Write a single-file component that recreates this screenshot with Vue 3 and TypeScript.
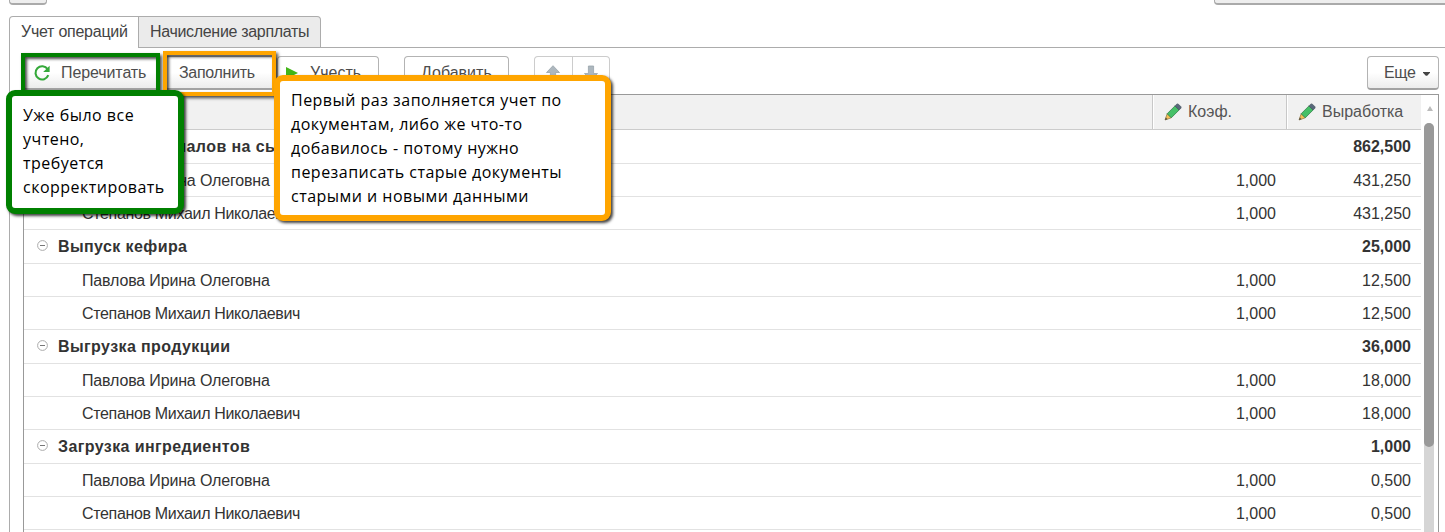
<script setup lang="ts">
interface Row {
  name: string
  coef?: string
  output: string
  group?: boolean
  long?: boolean
}

const rows: Row[] = [
  { name: 'Выдача материалов на сырье', output: '862,500', group: true },
  { name: 'Павлова Ирина Олеговна', coef: '1,000', output: '431,250' },
  { name: 'Степанов Михаил Николаевич', coef: '1,000', output: '431,250', long: true },
  { name: 'Выпуск кефира', output: '25,000', group: true },
  { name: 'Павлова Ирина Олеговна', coef: '1,000', output: '12,500' },
  { name: 'Степанов Михаил Николаевич', coef: '1,000', output: '12,500', long: true },
  { name: 'Выгрузка продукции', output: '36,000', group: true },
  { name: 'Павлова Ирина Олеговна', coef: '1,000', output: '18,000' },
  { name: 'Степанов Михаил Николаевич', coef: '1,000', output: '18,000', long: true },
  { name: 'Загрузка ингредиентов', output: '1,000', group: true },
  { name: 'Павлова Ирина Олеговна', coef: '1,000', output: '0,500' },
  { name: 'Степанов Михаил Николаевич', coef: '1,000', output: '0,500', long: true },
]

const columns: string[] = ['Коэф.', 'Выработка']
const firstNote: string[] = ['Уже было все', 'учтено,', 'требуется', 'скорректировать']
const secondNote: string[] = [
  'Первый раз заполняется учет по',
  'документам, либо же что-то',
  'добавилось - потому нужно',
  'перезаписать старые документы',
  'старыми и новыми данными',
]
</script>

<template>
  <div class="page">
    <div class="top-strip">
      <div class="stub stub-left"></div>
      <div class="stub stub-right"></div>
    </div>

    <div class="tabs">
      <div class="tab active"><span>Учет операций</span></div>
      <div class="tab second"><span>Начисление зарплаты</span></div>
      <div class="tab-line"></div>
    </div>

    <div class="panel">
      <div class="toolbar">
        <div class="btn reread">
          <svg class="refresh" width="18" height="18" viewBox="0 0 18 18">
            <path d="M14.6 5.2A6.6 6.6 0 1 0 15.3 11.2" fill="none" stroke="#35a93a" stroke-width="2.1" />
            <path d="M16.6 1.8V8H10.2Z" fill="#35a93a" />
          </svg>
          <span>Перечитать</span>
        </div>
        <div class="btn fill"><span>Заполнить</span></div>
        <div class="btn account">
          <svg width="12" height="12" viewBox="0 0 12 12"><path d="M0 0L12 6L0 12Z" fill="#43b518" /></svg>
          <span>Учесть</span>
        </div>
        <div class="btn add"><span>Добавить</span></div>
        <div class="btn arrows">
          <div class="arrow">
            <svg width="14" height="16" viewBox="0 0 14 16"><path d="M7 .7L13.5 7.5H9.6V15H4.4V7.5H.5Z" fill="#adb7be" stroke="#98a3ab" stroke-width=".8" /></svg>
          </div>
          <div class="arrow">
            <svg width="14" height="16" viewBox="0 0 14 16"><path d="M7 15.3L13.5 8.5H9.6V1H4.4V8.5H.5Z" fill="#adb7be" stroke="#98a3ab" stroke-width=".8" /></svg>
          </div>
        </div>
        <div class="btn more">
          <span>Еще</span>
          <svg width="7" height="4" viewBox="0 0 7 4"><path d="M0 0H7V.8L4.2 3.8H2.8L0 .8Z" fill="#444" /></svg>
        </div>
      </div>

      <div class="table">
        <div class="content">
          <div class="row header">
            <div class="cell name"></div>
            <div v-for="(c, i) in columns" :key="c" class="cell head" :class="i === 0 ? 'coef' : 'output'">
              <svg class="pencil" width="18" height="18" viewBox="0 0 18 18">
                <path d="M1 17L3.2 10.7L7.3 14.8Z" fill="#f5bf55" stroke="#8b7440" stroke-width=".7" />
                <path d="M1 17L1.8 14.5L3.5 16.2Z" fill="#4b4b44" />
                <path d="M3.2 10.7L11 2.9L15.1 7L7.3 14.8Z" fill="#45c067" stroke="#328048" stroke-width=".8" />
                <path d="M11 2.9L12.7 1.2Q13.5 .6 14.4 1.2L16.8 3.6Q17.4 4.5 16.8 5.3L15.1 7Z" fill="#58687b" stroke="#46515f" stroke-width=".7" />
              </svg>
              <span>{{ c }}</span>
            </div>
          </div>
          <div v-for="(r, i) in rows" :key="i" class="row" :class="{ group: r.group, long: r.long }">
            <div class="cell name">
              <svg v-if="r.group" class="toggle" width="11" height="11" viewBox="0 0 11 11">
                <circle cx="5.5" cy="5.5" r="4.9" fill="#fff" stroke="#aaa" stroke-width="1" />
                <path d="M3 5.5H8" stroke="#777" />
              </svg>
              <span>{{ r.name }}</span>
            </div>
            <div class="cell coef">{{ r.coef }}</div>
            <div class="cell output">{{ r.output }}</div>
          </div>
        </div>
        <div class="scroll">
          <svg width="6" height="5" viewBox="0 0 6 5"><path d="M3 0L6 5H0Z" fill="#bbb" /></svg>
          <div class="track"><div class="thumb"></div></div>
        </div>
      </div>
    </div>

    <div class="frame frame-green"></div>
    <div class="frame frame-orange"></div>
    <div class="note note-green">
      <div v-for="l in firstNote" :key="l"><span>{{ l }}</span></div>
    </div>
    <div class="note note-orange">
      <div v-for="l in secondNote" :key="l"><span>{{ l }}</span></div>
    </div>
  </div>
</template>

<style>
body {
  margin: 0;
  overflow: hidden;
  background: #fff;
}
</style>

<style scoped>
.page {
  position: relative;
  width: 1445px;
  height: 532px;
  overflow: hidden;
  background: #fff;
  color: #333;
  font: 16px/20px "Liberation Sans", Arial, sans-serif;
  white-space: nowrap;
}
.page * {
  box-sizing: border-box;
}
.top-strip {
  display: flex;
  justify-content: space-between;
  height: 16px;
  padding-left: 9px;
}
.stub {
  height: 5px;
  background: #eee;
  border: 1px solid #aaa;
  border-top: 0;
  border-bottom: 2px solid #aaa;
}
.stub-left {
  width: 38px;
  border-radius: 0 0 4px 4px;
}
.stub-right {
  width: 231px;
  border-right: 0;
  border-radius: 0 0 0 4px;
}
.tabs {
  display: flex;
  height: 32px;
  padding-left: 9px;
}
.tab {
  padding: 5px 0 0 11px;
  border: 1px solid #acacac;
  color: #444;
}
.tab.active {
  width: 130px;
  border-bottom: 0;
  border-radius: 4px 0 0 0;
  letter-spacing: -0.25px;
}
.tab.second {
  width: 182px;
  border-left: 0;
  background: #ebebeb;
  border-radius: 0 4px 0 0;
  letter-spacing: -0.32px;
}
.tab-line {
  flex: 1;
  border-bottom: 1px solid #acacac;
}
.panel {
  height: 484px;
  margin-left: 9px;
  border-left: 1px solid #acacac;
}
.toolbar {
  display: flex;
  height: 46px;
  padding: 8px 6px 0 13px;
}
.btn {
  display: flex;
  align-items: center;
  height: 34px;
  border: 1px solid #b3b3b3;
  border-bottom: 2px solid #a2a2a2;
  border-radius: 4px;
  background: linear-gradient(#fff 50%, #ececec);
  color: #4d4d4d;
}
.reread {
  width: 137px;
  padding-left: 9px;
  gap: 10px;
  letter-spacing: -0.1px;
}
.fill {
  width: 112px;
  margin-left: 5px;
  padding-left: 13px;
  letter-spacing: -0.3px;
}
.account {
  width: 102px;
  padding-left: 8px;
  gap: 12px;
}
.add {
  width: 105px;
  margin-left: 25px;
  padding-left: 16px;
}
.arrows {
  width: 76px;
  margin-left: 25px;
  border-color: #ccc;
}
.arrow {
  display: flex;
  flex: 1;
  height: 100%;
  align-items: center;
  justify-content: center;
}
.arrow + .arrow {
  border-left: 1px solid #ccc;
}
.more {
  width: 72px;
  margin-left: auto;
  padding-left: 16px;
  gap: 7px;
  letter-spacing: -0.3px;
}
.more svg {
  margin-top: 2px;
}
.table {
  display: flex;
  height: 438px;
  margin: 0 6px 0 13px;
  border: 1px solid #999;
  border-bottom: 0;
  overflow: hidden;
}
.content {
  width: 1397px;
}
.row {
  display: flex;
  height: 33px;
  padding-top: 1px;
  border-bottom: 1px solid #e2e2e2;
}
.row.group {
  height: 34px;
  padding-top: 0;
  font-weight: bold;
}
.row.header {
  height: 35px;
  padding-top: 0;
  border-bottom: 1px solid #ccc;
  background: #f1f1f1;
  color: #555;
}
.cell {
  display: flex;
  align-items: center;
}
.name {
  flex: 1;
  padding-left: 58px;
  letter-spacing: -0.16px;
}
.long .name {
  letter-spacing: -0.33px;
}
.group .name {
  padding-left: 13px;
  gap: 10px;
  letter-spacing: 0.4px;
}
.toggle {
  margin-top: -2px;
}
.coef {
  width: 134px;
  justify-content: flex-end;
  padding-right: 10px;
}
.output {
  width: 135px;
  justify-content: flex-end;
  padding-right: 10px;
}
.head {
  justify-content: flex-start;
  padding: 0 0 0 11px;
  gap: 6px;
  border-left: 1px solid #c8c8c8;
  box-shadow: inset 1px 0 #fff;
}
.scroll {
  display: flex;
  flex: 1;
  flex-direction: column;
  align-items: center;
  padding-top: 11px;
}
.track {
  width: 10px;
  flex: 1;
  margin: 12px 2px 0 0;
  border-radius: 5px 5px 0 0;
  background: #d5d5d5;
}
.thumb {
  height: 324px;
  border-radius: 5px;
  background: #999;
}
.frame,
.note {
  position: absolute;
}
.frame {
  border: 4px solid;
  box-shadow: 2px 2px 3px rgba(0, 0, 0, 0.7), inset 2px 2px 3px rgba(0, 0, 0, 0.7);
}
.frame-green {
  left: 21px;
  top: 53px;
  width: 139px;
  height: 43px;
  border-color: #008000;
}
.frame-orange {
  left: 163px;
  top: 51px;
  width: 113px;
  height: 45px;
  border-color: #ffa500;
}
.note {
  border: 6px solid;
  border-radius: 9px;
  background: #fff;
  box-shadow: 2px 2px 3px rgba(0, 0, 0, 0.75);
  color: #000;
  font: 16px/24px "Open Sans", "Noto Sans", sans-serif;
  letter-spacing: 0.48px;
}
.note-green {
  left: 6px;
  top: 90px;
  width: 178px;
  height: 124px;
  padding: 7px 0 0 11px;
  border-color: #008000;
}
.note-orange {
  left: 274px;
  top: 75px;
  width: 337px;
  height: 146px;
  padding: 7px 0 0 11px;
  border-color: #ffa500;
}
</style>
